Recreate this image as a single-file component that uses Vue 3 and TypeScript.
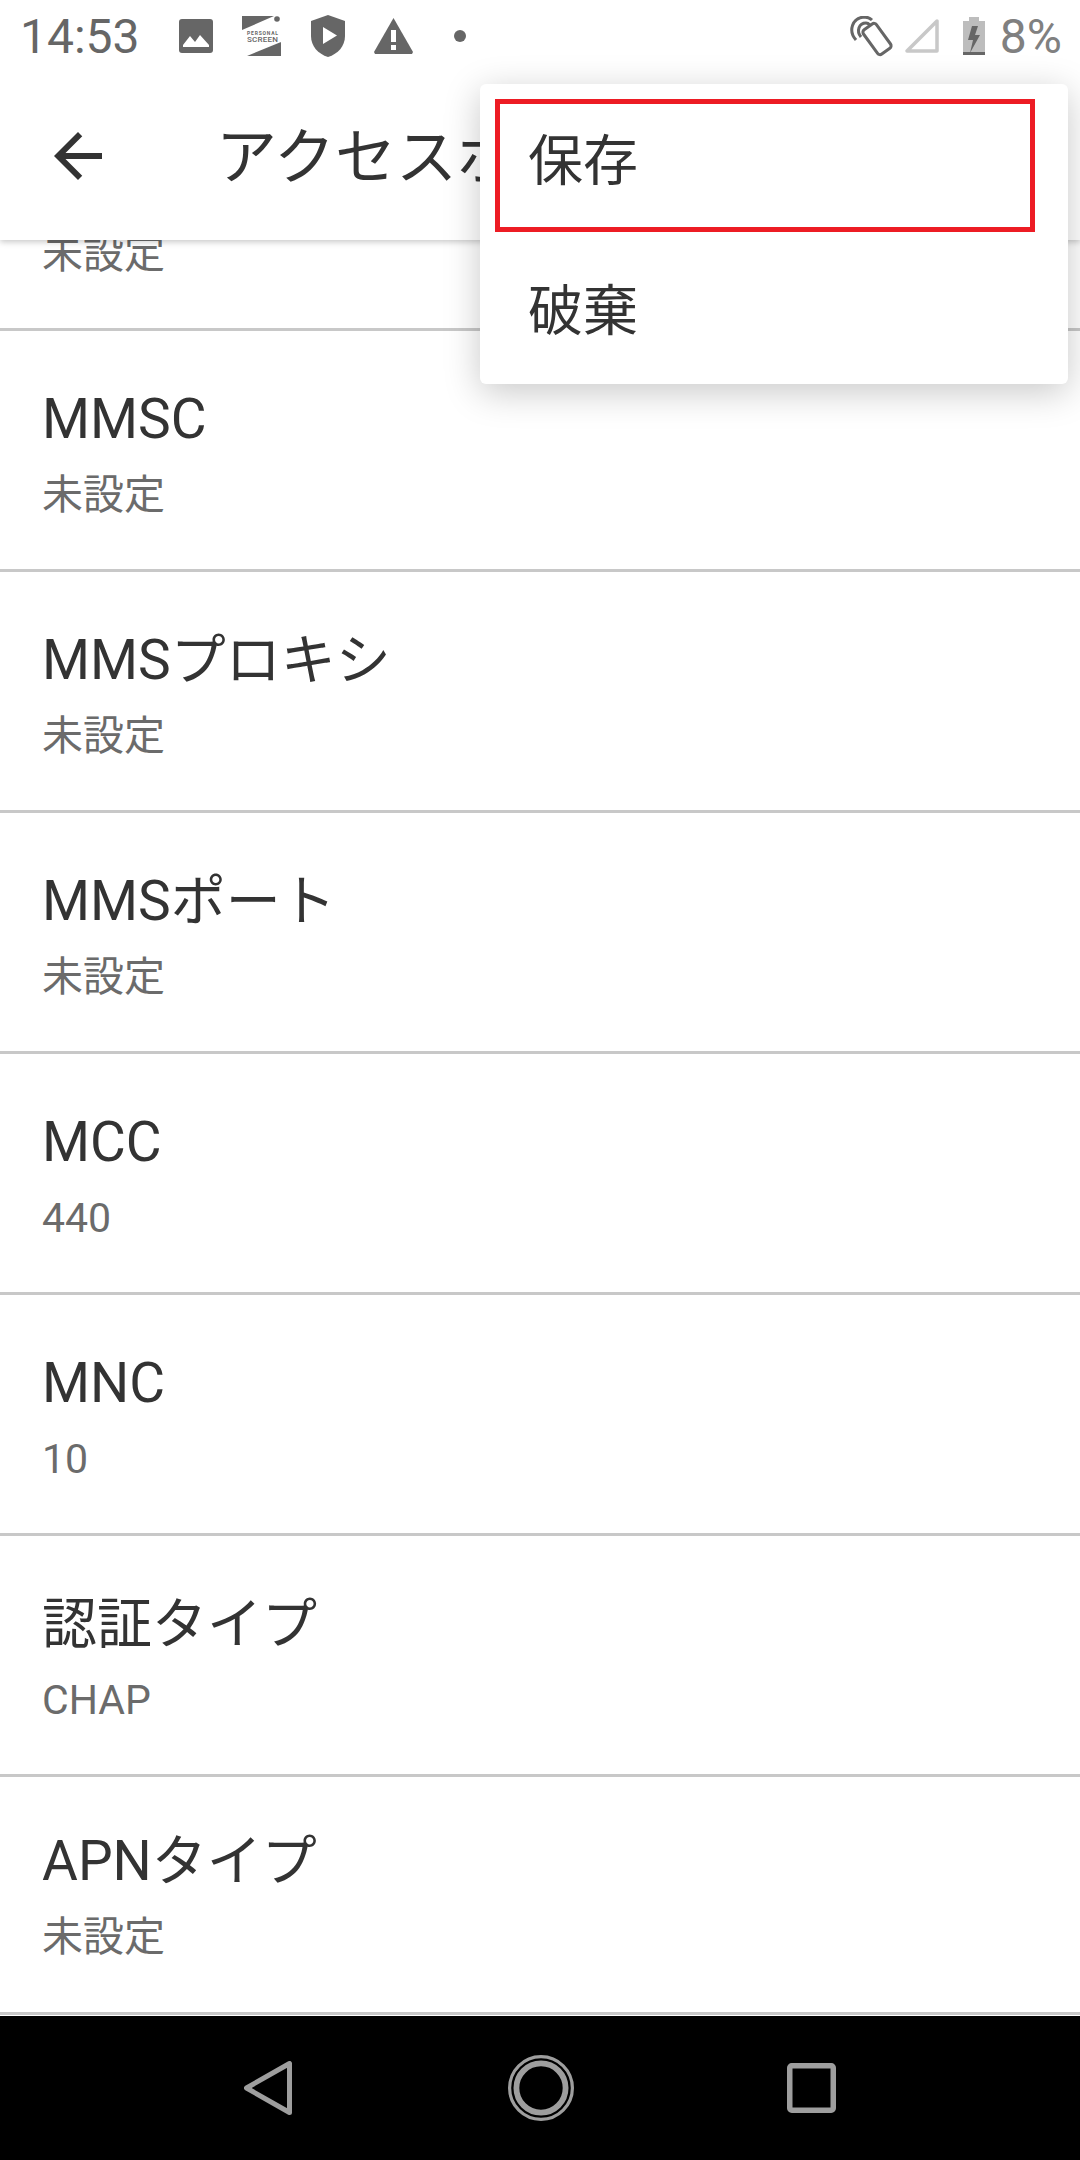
<script setup lang="ts">
interface Field {
  title: string
  value: string
}

const fields: Field[] = [
  { title: 'MMSC', value: '未設定' },
  { title: 'MMSプロキシ', value: '未設定' },
  { title: 'MMSポート', value: '未設定' },
  { title: 'MCC', value: '440' },
  { title: 'MNC', value: '10' },
  { title: '認証タイプ', value: 'CHAP' },
  { title: 'APNタイプ', value: '未設定' },
]
</script>

<template>
  <div class="screen">
    <header class="status">
      <span class="time">14:53</span>
      <div class="notif">
        <svg width="34" height="34" viewBox="0 0 34 34">
          <rect width="34" height="34" rx="3" fill="#666" />
          <path d="M4 28v-2l7-9 5 6 5-7 9 10v2z" fill="#fff" />
        </svg>
        <div class="ps">
          <svg width="40" height="40" viewBox="0 0 40 40">
            <path d="M0 0h32L0 14zM39 20v20H5l34-14z" fill="#666" />
            <circle cx="35" cy="3" r="2.800" fill="#666" />
          </svg>
          <span class="ps-a">PERSONAL</span>
          <span class="ps-b">SCREEN</span>
        </div>
        <svg width="34" height="42" viewBox="0 0 34 42">
          <path d="M17 0l17 6v15c0 10-7 18-17 21C7 39 0 31 0 21V6z" fill="#666" />
          <path d="M12 12l14 8.500L12 29z" fill="#fff" />
        </svg>
        <svg width="39" height="36" viewBox="0 0 39 36">
          <path d="M19.500 0L39 34l-1 2H1l-1-2z" fill="#666" />
          <path d="M17 12h5v12h-5zM17 27h5v5h-5z" fill="#fff" />
        </svg>
        <span class="dot"></span>
      </div>
      <div class="sys">
        <svg width="44" height="41" viewBox="0 0 44 41" fill="none" stroke="#666" stroke-width="3">
          <rect x="20" y="8" width="16" height="30" rx="3" transform="rotate(-36 28 23)" />
          <path d="M7 24C-1 15 3 2 15 1c4 0 6 1 8 3" />
          <path d="M12 21C7 15 10 7 17 7c2 0 3 1 4 2" />
        </svg>
        <svg class="sig" width="34" height="34" viewBox="0 0 34 34">
          <path d="M32 2v30H2z" fill="none" stroke="#c8c8c8" stroke-width="3.500" stroke-linejoin="round" />
        </svg>
        <svg class="bat" width="22" height="38" viewBox="0 0 22 38">
          <path d="M6 0h10v4h6v34H0V4h6z" fill="#bdbdbd" />
          <rect y="35" width="22" height="3" fill="#666" />
          <path d="M15 9H9L5 23h5L7 36l10-18h-5z" fill="#666" />
        </svg>
        <span class="pct">8%</span>
      </div>
    </header>

    <div class="toolbar">
      <svg class="back" width="48" height="48" viewBox="4 4 16 16">
        <path d="M20 11H7.830l5.590-5.590L12 4l-8 8 8 8 1.410-1.410L7.830 13H20v-2z" fill="#333" />
      </svg>
      <h1 class="title">アクセスポイントの編集</h1>
    </div>

    <main class="list">
      <div class="cut">
        <span class="value">未設定</span>
      </div>
      <div v-for="f in fields" :key="f.title" class="row">
        <div class="label">{{ f.title }}</div>
        <div class="value">{{ f.value }}</div>
      </div>
    </main>

    <nav class="nav">
      <svg width="48" height="54" viewBox="0 0 48 54" fill="none" stroke="#9e9e9e" stroke-width="5" stroke-linejoin="round">
        <path d="M45.500 2.500v49L2.500 27z" />
      </svg>
      <svg class="home" width="66" height="66" viewBox="0 0 66 66" fill="none" stroke="#9e9e9e">
        <circle cx="33" cy="33" r="31.400" stroke-width="3.200" />
        <circle cx="33" cy="33" r="24.600" stroke-width="5.800" />
      </svg>
      <svg class="recent" width="49" height="50" viewBox="0 0 49 50" fill="none" stroke="#9e9e9e" stroke-width="5.500">
        <rect x="2.750" y="2.750" width="43.500" height="44.500" rx="2" />
      </svg>
    </nav>

    <div class="menu">
      <div class="item picked">保存</div>
      <div class="item">破棄</div>
    </div>
  </div>
</template>

<style>
html,
body {
  margin: 0;
  background: #fff;
}
</style>

<style scoped>
.screen {
  position: relative;
  width: 1080px;
  height: 2160px;
  display: flex;
  flex-direction: column;
  overflow: hidden;
  background: #fff;
  font-family: Roboto, "Noto Sans CJK JP", sans-serif;
  color: #333;
}

.status {
  height: 72px;
  flex: none;
  display: flex;
  align-items: center;
  padding: 0 18px 0 20px;
  background: #fff;
  position: relative;
  z-index: 2;
}

.time {
  font-size: 48px;
  color: #666;
  width: 159px;
}

.notif {
  display: flex;
  align-items: center;
  gap: 29px;
}

.notif svg {
  display: block;
}

.ps {
  position: relative;
  width: 40px;
  height: 40px;
}

.ps-a,
.ps-b {
  position: absolute;
  left: 5px;
  color: #666;
  white-space: nowrap;
}

.ps-a {
  top: 14px;
  font-size: 5px;
  line-height: 6px;
  font-weight: 700;
  letter-spacing: 0.8px;
}

.ps-b {
  top: 19px;
  font-size: 8px;
  line-height: 9px;
  font-weight: 500;
  letter-spacing: 0.2px;
}

.dot {
  width: 12px;
  height: 12px;
  margin-left: 12px;
  border-radius: 50%;
  background: #666;
}

.sys {
  margin-left: auto;
  display: flex;
  align-items: center;
  gap: 12px;
}

.bat {
  margin-left: 12px;
}

.pct {
  font-size: 48px;
  color: #808080;
  margin-left: 3px;
}

.toolbar {
  height: 168px;
  flex: none;
  display: flex;
  align-items: center;
  padding-left: 54px;
  background: #fff;
  box-shadow: 0 2px 6px rgba(0, 0, 0, 0.22);
  position: relative;
  z-index: 1;
}

.title {
  margin: 0 0 0 114px;
  padding-bottom: 8px;
  font-size: 61px;
  font-weight: 400;
  white-space: nowrap;
}

.list {
  flex: 1;
  min-height: 0;
  overflow: hidden;
}

.cut {
  height: 91px;
  border-bottom: 3px solid #c8c8c8;
  padding-left: 42px;
  display: flex;
  align-items: flex-end;
  padding-bottom: 47px;
  box-sizing: border-box;
}

.row {
  height: 241px;
  box-sizing: border-box;
  border-bottom: 3px solid #c8c8c8;
  padding: 52px 42px 0;
}

.row:last-child {
  height: 238px;
  padding-top: 48px;
}

.label {
  font-size: 55px;
  line-height: 72px;
}

.value {
  margin-top: 13px;
  font-size: 41px;
  line-height: 54px;
  color: #6b6b6b;
}

.cut .value {
  margin: 0;
}

.nav {
  height: 144px;
  flex: none;
  background: #000;
  display: flex;
  align-items: center;
  justify-content: center;
}

.home {
  margin: 0 213px 0 216px;
}

.menu {
  position: absolute;
  top: 84px;
  left: 480px;
  width: 588px;
  height: 300px;
  z-index: 3;
  background: #fff;
  border-radius: 6px;
  box-shadow: 0 8px 36px rgba(0, 0, 0, 0.22);
}

.item {
  height: 150px;
  box-sizing: border-box;
  padding: 0 0 6px 48px;
  display: flex;
  align-items: center;
  font-size: 55px;
}

.picked {
  position: relative;
}

.picked::after {
  content: "";
  position: absolute;
  left: 15px;
  top: 15px;
  width: 540px;
  height: 133px;
  box-sizing: border-box;
  border: 5px solid #ed1c24;
}
</style>
